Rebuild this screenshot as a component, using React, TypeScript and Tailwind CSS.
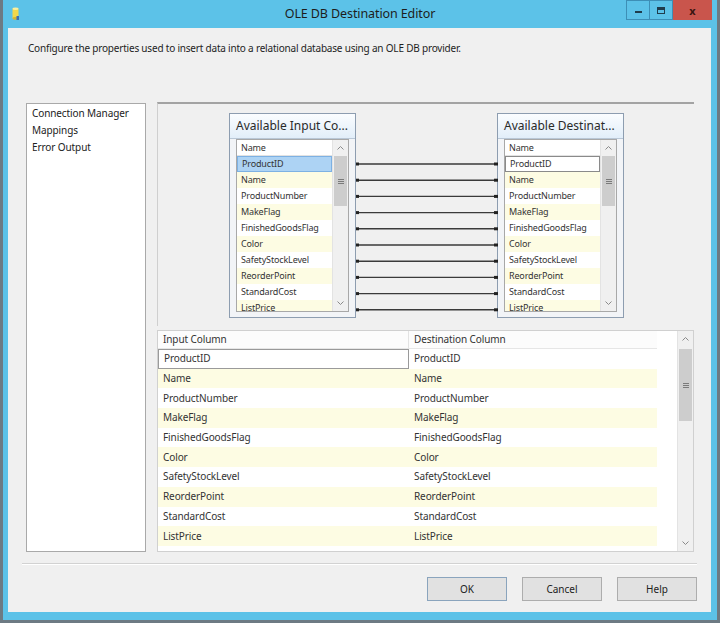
import React from 'react'

const cols = [
  'ProductID',
  'Name',
  'ProductNumber',
  'MakeFlag',
  'FinishedGoodsFlag',
  'Color',
  'SafetyStockLevel',
  'ReorderPoint',
  'StandardCost',
  'ListPrice',
  'Size',
]

const font = { fontFamily: '"Noto Sans", "Open Sans", sans-serif' }

function DbIcon() {
  return (
    <svg width="7" height="13" viewBox="0 0 7 13">
      <rect x="0.5" y="1.5" width="6" height="10" fill="#f2d84a" />
      <ellipse cx="3.5" cy="1.8" rx="3" ry="1.3" fill="#fbf0a0" />
      <ellipse cx="3.5" cy="11.4" rx="3" ry="1.3" fill="#d8b530" />
      <rect x="4.5" y="9" width="2.5" height="4" fill="#3b6fb0" />
    </svg>
  )
}

function ScrollBar({ thumbTop, thumbH }: { thumbTop: number; thumbH: number }) {
  return (
    <div className="w-[16px] h-full flex flex-col bg-[#f0f0f0] border-l border-[#e3e3e3]">
      <div className="h-[16px] flex items-center justify-center">
        <svg width="7" height="4" viewBox="0 0 7 4">
          <path d="M0.5 3.5 L3.5 0.5 L6.5 3.5" stroke="#8a8a8a" fill="none" strokeWidth="1" />
        </svg>
      </div>
      <div className="flex-1 flex flex-col">
        <div style={{ height: thumbTop }} />
        <div
          className="mx-[1px] bg-[#cdcdcd] flex flex-col items-center justify-center gap-[1px]"
          style={{ height: thumbH }}
        >
          <div className="w-[6px] h-[1px] bg-[#7a7a7a]" />
          <div className="w-[6px] h-[1px] bg-[#7a7a7a]" />
          <div className="w-[6px] h-[1px] bg-[#7a7a7a]" />
        </div>
      </div>
      <div className="h-[16px] flex items-center justify-center">
        <svg width="7" height="4" viewBox="0 0 7 4">
          <path d="M0.5 0.5 L3.5 3.5 L6.5 0.5" stroke="#8a8a8a" fill="none" strokeWidth="1" />
        </svg>
      </div>
    </div>
  )
}

function ColumnBox({ title, highlight }: { title: string; highlight: 'selected' | 'focus' }) {
  return (
    <div className="w-[127px] h-[205px] border border-[#8d9db0] bg-[#f2f4f7] flex flex-col">
      <div className="h-[25px] shrink-0 bg-gradient-to-b from-[#fbfdff] to-[#e2eef9] border-b border-[#b9c7d6] flex items-center px-[6px] text-[12px] text-[#2a2a2a]">
        {title}
      </div>
      <div className="flex-1 mx-[6px] mb-[5px] border border-[#a8a8a8] bg-white flex overflow-hidden">
        <div className="flex-1 flex flex-col overflow-hidden text-[9px] tracking-[-0.15px] text-[#333]">
          <div className="h-[16px] shrink-0 flex items-center px-[4px] border-b border-[#e2e2e2]">Name</div>
          {cols.slice(0, 10).map((c, i) => {
            let cls = i % 2 === 1 ? 'bg-[#fdfce3]' : 'bg-white'
            if (i === 0 && highlight === 'selected') cls = 'bg-[#add3f4] border border-[#7db1e3]'
            if (i === 0 && highlight === 'focus') cls = 'bg-white border border-[#8a8a8a]'
            return (
              <div key={c} className={`h-[16px] shrink-0 flex items-center px-[4px] ${cls}`}>
                {c}
              </div>
            )
          })}
        </div>
        <ScrollBar thumbTop={0} thumbH={50} />
      </div>
    </div>
  )
}

function Button({ label, primary }: { label: string; primary?: boolean }) {
  return (
    <div
      className={`w-[80px] h-[24px] flex items-center justify-center text-[10px] text-[#222] bg-[#e1e1e1] border ${
        primary ? 'border-[#8aa4bd]' : 'border-[#adadad]'
      }`}
    >
      {label}
    </div>
  )
}

export default function App() {
  const rowYs = Array.from({ length: 10 }, (_, i) => 60 + i * 16.2)
  return (
    <div className="w-[720px] h-[623px] bg-[#6d7a83] overflow-hidden" style={font}>
      <div className="ml-[3px] w-[714px] h-[620px] bg-[#5cc2e8] flex flex-col">
        {/* Title bar */}
        <div className="h-[28px] shrink-0 grid grid-cols-[1fr_auto_1fr] items-start">
          <div className="pl-[9px] pt-[7px]">
            <DbIcon />
          </div>
          <div className="pt-[6px] text-[12.5px] tracking-[-0.1px] text-[#1d1d1d] leading-[16px]">
            OLE DB Destination Editor
          </div>
          <div className="flex justify-end pr-[5px]">
            <div className="w-[24px] h-[20px] border border-[#3d8fb6] bg-[#5cc2e8] flex items-end justify-center pb-[6px]">
              <div className="w-[7px] h-[2px] bg-[#1f3d4d]" />
            </div>
            <div className="w-[23px] h-[20px] border border-[#3d8fb6] border-l-0 bg-[#5cc2e8] flex items-center justify-center">
              <div className="w-[8px] h-[7px] border border-[#1f3d4d] border-t-[3px]" />
            </div>
            <div className="w-[39px] h-[20px] bg-[#c9554c] flex items-center justify-center text-[11px] font-bold text-[#3a1410] leading-none">
              x
            </div>
          </div>
        </div>

        {/* Client area */}
        <div className="ml-[5px] w-[703px] h-[584px] bg-[#f0f0f0] flex flex-col">
          <div className="mt-[13px] ml-[20px] text-[10px] tracking-[-0.2px] leading-[14px] text-[#1e1e1e]">
            Configure the properties used to insert data into a relational database using an OLE DB provider.
          </div>

          <div className="mt-[47px] h-[450px] flex">
            {/* Page list */}
            <div className="ml-[18px] mt-[1px] w-[120px] h-[449px] bg-white border border-[#a9a9a9] pt-[1px] text-[10px] tracking-[-0.1px] text-[#222]">
              <div className="h-[17px] flex items-center px-[5px]">Connection Manager</div>
              <div className="h-[17px] flex items-center px-[5px]">Mappings</div>
              <div className="h-[17px] flex items-center px-[5px]">Error Output</div>
            </div>

            {/* Mapping page */}
            <div className="ml-[11px] w-[537px] flex flex-col">
              <div className="relative h-[224px] border-t-2 border-[#a3a3a3] border-l border-l-[#cfcfcf] flex items-start pt-[9px]">
                <div className="ml-[71px]">
                  <ColumnBox title="Available Input Co..." highlight="selected" />
                </div>
                <div className="ml-[141px]">
                  <ColumnBox title="Available Destinat..." highlight="focus" />
                </div>
                <svg className="absolute left-0 top-0" width="537" height="224">
                  {rowYs.map((y, i) => (
                    <g key={i}>
                      <line x1="199" y1={y} x2="339" y2={y} stroke="#3a3a3a" strokeWidth="1.4" />
                      <rect x="198" y={y - 1.5} width="3" height="3" fill="#222" />
                      <rect x="336" y={y - 1.5} width="4" height="3" fill="#222" />
                    </g>
                  ))}
                </svg>
              </div>

              {/* Mapping grid */}
              <div className="mt-[4px] h-[222px] bg-white border border-[#d0d0d0] flex overflow-hidden">
                <div className="w-[499px] flex flex-col text-[10px] tracking-[-0.1px] text-[#333] overflow-hidden">
                  <div className="h-[18px] shrink-0 flex border-b border-[#e6e6e6] bg-[#fcfcfc]">
                    <div className="w-[251px] flex items-center px-[5px] border-r border-[#e3e3e3]">Input Column</div>
                    <div className="flex-1 flex items-center px-[5px]">Destination Column</div>
                  </div>
                  {cols.map((c, i) => (
                    <div
                      key={c}
                      className={`h-[19.7px] shrink-0 flex ${i % 2 === 1 ? 'bg-[#fdfce3]' : 'bg-white'}`}
                    >
                      <div
                        className={`w-[251px] flex items-center px-[5px] ${
                          i === 0 ? 'border border-[#9a9a9a]' : ''
                        }`}
                      >
                        {c}
                      </div>
                      <div className="flex-1 flex items-center px-[5px]">{c}</div>
                    </div>
                  ))}
                </div>
                <div className="flex-1" />
                <ScrollBar thumbTop={2} thumbH={72} />
              </div>
            </div>
          </div>

          <div className="mt-[11px] ml-[14px] w-[675px] h-[2px] border-t border-[#d2d2d2] border-b border-b-white" />

          <div className="mt-[12px] flex justify-end gap-[15px] pr-[14px]">
            <Button label="OK" primary />
            <Button label="Cancel" />
            <Button label="Help" />
          </div>
        </div>
      </div>
    </div>
  )
}
